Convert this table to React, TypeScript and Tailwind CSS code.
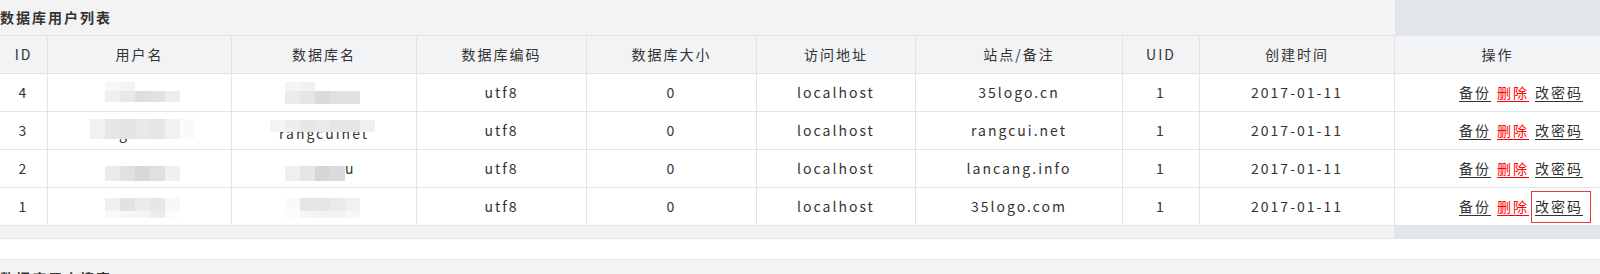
import React from "react";

const cols = "grid-cols-[48px_184px_185px_170px_170px_159px_207px_77px_195px_205px]";
const font = { fontFamily: '"Noto Sans CJK SC", "Noto Sans", sans-serif' };

type Blur = { left: number; top: number; h: number; colors: string[] };

const Mosaic = ({ left, top, h, colors }: Blur) => (
	<div className="absolute flex" style={{ left, top }}>
		{colors.map((c, i) => (
			<div key={i} className="w-[15px]" style={{ height: h, background: c }} />
		))}
	</div>
);

const rows = [
	{
		id: "4",
		user: { text: "", blurs: [{ left: 57, top: 8, h: 9, colors: ["#f7f7f7", "#f3f3f3"] }, { left: 57, top: 17, h: 11, colors: ["#efefef", "#e8e8e6", "#dedfe0", "#e2e2e3", "#ececed"] }] },
		db: { text: "", blurs: [{ left: 53, top: 8, h: 9, colors: ["#f4f4f4", "#f1f1f1"] }, { left: 53, top: 17, h: 13, colors: ["#ebebeb", "#e5e5e5", "#dcdbd8", "#dfe1e3", "#e3e2e0"] }] },
		site: "35logo.cn",
	},
	{
		id: "3",
		user: { text: "rangcui.net", blurs: [{ left: 42, top: 7, h: 20, colors: ["#f1f1f0", "#e6e6e5", "#e3e4e4", "#e7e8e8", "#e4e5e5", "#f1f1f1", "#fafafa"] }] },
		db: { text: "rangcuinet", blurs: [{ left: 38, top: 8, h: 12, colors: ["#f4f4f4", "#eeeeee", "#e7e7e7", "#e9eaea", "#e6e6e6", "#e4e5e6", "#efefef"] }] },
		site: "rangcui.net",
	},
	{
		id: "2",
		user: { text: "", blurs: [{ left: 57, top: 16, h: 15, colors: ["#ebebeb", "#e1e1e2", "#d8d8da", "#e0e0e1", "#f0f0f0"] }] },
		db: { text: "u", blurs: [{ left: 53, top: 16, h: 15, colors: ["#efefef", "#e6e6e5", "#d6d6d8", "#dadadc"] }] },
		site: "lancang.info",
	},
	{
		id: "1",
		user: { text: "", blurs: [{ left: 57, top: 10, h: 13, colors: ["#f0f0f0", "#e3e2e1", "#ebebeb", "#e5e6e7", "#f6f7f7"] }, { left: 57, top: 23, h: 7, colors: ["#fafafa", "#f6f6f6", "#f5f5f5", "#ececed", "#fcfcfc"] }] },
		db: { text: "", blurs: [{ left: 53, top: 10, h: 13, colors: ["#fafafa", "#e5e6e7", "#e6e6e6", "#ebeaea", "#f1f1f3"] }, { left: 53, top: 23, h: 7, colors: ["#fcfcfc", "#f6f6f6", "#f3f3f3", "#f3f3f3", "#f7f7f8"] }] },
		site: "35logo.com",
	},
];

const cell = "flex items-center justify-center border-r border-[#e1e4e8] tracking-[2px]";

const App = () => {
	return (
		<div className="w-[1600px] h-[274px] overflow-hidden bg-white text-[14px] text-[#333]" style={font}>
			<div className="flex h-[36px] border-b border-[#e1e4e8]">
				<div className="w-[1395px] bg-[#f2f3f5] flex items-center font-bold tracking-[2px]">数据库用户列表</div>
				<div className="flex-1 bg-[#e2e5e9]" />
			</div>

			<div className={`grid ${cols} h-[38px] bg-[#f2f3f5] border-b border-[#e1e4e8]`}>
				{["ID", "用户名", "数据库名", "数据库编码", "数据库大小", "访问地址", "站点/备注", "UID", "创建时间", "操作"].map((h, i) => (
					<div key={h} className={`${cell} ${i === 9 ? "border-r-0" : ""}`}>
						{h}
					</div>
				))}
			</div>

			{rows.map((r, ri) => (
				<div key={r.id} className={`grid ${cols} h-[38px] border-b border-[#e1e4e8]`}>
					<div className={cell}>{r.id}</div>
					<div className={`${cell} relative`}>
						<span className="mt-[6px]">{r.user.text}</span>
						{r.user.blurs.map((b, i) => (
							<Mosaic key={i} {...b} />
						))}
					</div>
					<div className={`${cell} relative ${ri === 2 ? "justify-start pl-[113px]" : ""}`}>
						<span className={ri === 1 ? "mt-[6px]" : ""}>{r.db.text}</span>
						{r.db.blurs.map((b, i) => (
							<Mosaic key={i} {...b} />
						))}
					</div>
					<div className={cell}>utf8</div>
					<div className={cell}>0</div>
					<div className={cell}>localhost</div>
					<div className={cell}>{r.site}</div>
					<div className={cell}>1</div>
					<div className={cell}>2017-01-11</div>
					<div className="flex items-center justify-end pr-[9px] tracking-[2px]">
						<a className="underline underline-offset-[3px] cursor-pointer">备份</a>
						<a className="ml-[6px] underline underline-offset-[3px] text-[#ff0000] cursor-pointer">删除</a>
						<a
							className={`ml-[2px] pl-[3px] pr-[7px] h-[32px] flex items-center border underline underline-offset-[3px] cursor-pointer ${
								ri === 3 ? "border-[#e83a3a]" : "border-transparent"
							}`}
						>
							改密码
						</a>
					</div>
				</div>
			))}

			<div className="flex h-[13px] border-b border-[#e1e4e8]">
				<div className="w-[1395px] bg-[#f2f3f5] border-r border-[#e6e8eb]" />
				<div className="flex-1 bg-[#e2e5e9]" />
			</div>
			<div className="h-[21px] border-b border-[#e1e4e8]" />
			<div className="h-[40px] bg-[#f2f3f5] pt-[8px] font-bold tracking-[2px]">数据库用户搜索</div>
		</div>
	);
};

export default App;
